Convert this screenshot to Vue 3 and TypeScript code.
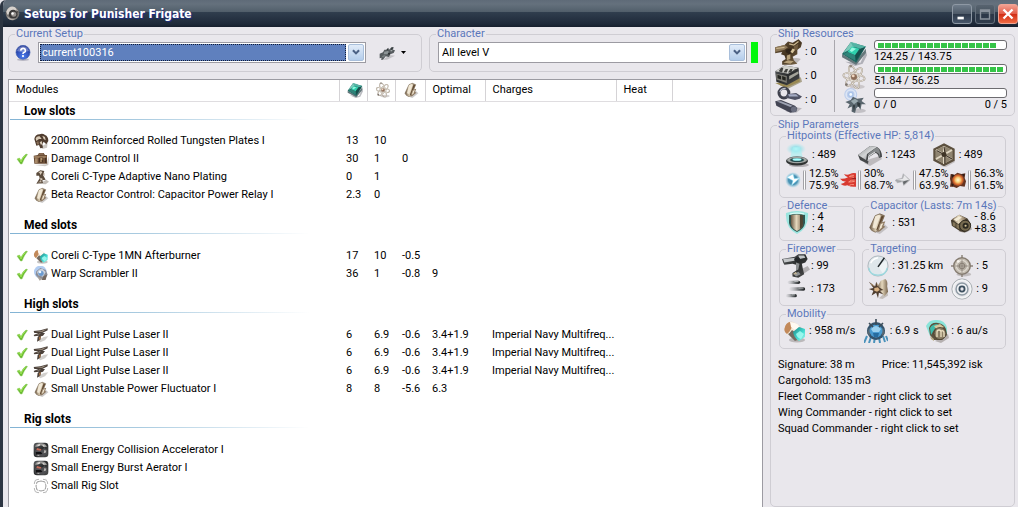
<script setup lang="ts">
import { ref } from 'vue'

interface ModuleRow {
  name: string
  icon: string
  active?: boolean
  cpu?: string
  grid?: string
  cap?: string
  optimal?: string
  charge?: string
}

interface SlotGroup {
  title: string
  rows: ModuleRow[]
}

const cell = '<path d="M9 22 19 13 23 17 14 24z" fill="#aaa6a6" opacity=".6"/><path d="m3 17 6-13 5-2 5 2-6 15-4 3-4-2z" fill="url(#g-bronze)" stroke="#6a563f" stroke-width=".8"/><path d="m9 5 4-2 2 1-6 14-3-1z" fill="#f1e8d6"/><path d="m16 4 2 1-6 14-2 1z" fill="#5e4730"/><path d="m14 12 6-2-2 5 2 1-6 5-3 1z" fill="#8d7860"/><path d="m15 13 3-1-2 4 1 0-4 4z" fill="#f2e7d2"/>'
const thruster = '<ellipse cx="14" cy="21" rx="8" ry="2.5" fill="#8d8988" opacity=".5"/><path d="M2 8Q4 2 10 3l6 3q5 5 5 11-3 5-8 5l-9-7Q1 12 2 8z" fill="url(#g-bone)"/><path d="M2 8q1-4 5-5 3 3 1 7t-4 5Q0 12 2 8z" fill="#c2895a"/><path d="M7 3q6 0 10 5l-5 3-4-3z" fill="#fffaf2"/><path d="M5 15q2-1 4-4l4 3 1 7-2 1z" fill="#746a60"/><path d="m10 13 6-5 6 2v8l-6 4q-5-3-6-9z" fill="url(#g-teal)"/><path d="m13 15 4-3 4 3-3 5q-4-1-5-5z" fill="#a5fbf2" opacity=".85"/>'
const laser = '<path d="M7 20 16 15l7-1-5 6-7 3z" fill="#b4b0ac" opacity=".6"/><path d="M1 6 11 5l11-3v3l-8 4 4 0-3 4-3 1-1 5-5 3 1-7 2-2-7 1-1-2 7-3-6 0z" fill="#4a4039"/><path d="m3 7 9-1 9-3-7 4zM4 12l8-3-2 2z" fill="#ab9c8b"/><path d="m9 15 3-1-1 4-2 2z" fill="#9c6b41"/>'
const rig = '<rect x="1" y="1" width="22" height="22" rx="5" fill="url(#g-dark)"/><path d="M3 7q2-5 9-5 6 0 9 5l-4 1-5-3-5 2z" fill="#9a9997"/><path d="m6 5 4-2 1 2-3 1zm8-1 4 2-2 1z" fill="#e8e6e2"/><path d="M3 12h10l4-3 4 3v6l-5 4-12-1z" fill="#4f4f52"/><path d="m6 9 7 2-2 2-6-1z" fill="#c46a58"/><path d="m4 15 8 0 2 3-9 1z" fill="#111113"/><path d="m17 12 3 1-1 3-3 1zM6 19l4 0-1 2-3-1z" fill="#b5b3b0"/>'
const atom = '<ellipse cx="15" cy="21" rx="7" ry="2" fill="#b7b3b4" opacity=".6"/><g fill="none" stroke="#9f9486" stroke-width="1.5"><ellipse cx="12" cy="12" rx="3.5" ry="11" transform="rotate(-18 12 12)"/><ellipse cx="12" cy="12" rx="3.5" ry="10.5" transform="rotate(42 12 12)"/><ellipse cx="12" cy="12" rx="3.5" ry="10" transform="rotate(100 12 12)"/></g><g fill="none" stroke="#f3eee5" stroke-width=".7"><ellipse cx="12" cy="12" rx="3.5" ry="11" transform="rotate(-18 12 12)"/><ellipse cx="12" cy="12" rx="3.5" ry="10.5" transform="rotate(42 12 12)"/><ellipse cx="12" cy="12" rx="3.5" ry="10" transform="rotate(100 12 12)"/></g><circle cx="12" cy="12" r="2.8" fill="#8d6d58"/><circle cx="11.3" cy="11" r="1.3" fill="#efd6c0"/><circle cx="5" cy="19" r="1.3" fill="#7d7570"/><circle cx="9" cy="2" r="1.2" fill="#91877e"/>'

const icons: Record<string, string> = {
  app: '<circle cx="12" cy="12" r="11" fill="#777472"/><path d="M2 9Q7-2 16 2l5 6-6 1-4 4-7 1z" fill="#d7d2cd"/><circle cx="13" cy="13" r="7" fill="#3c3a3a"/><circle cx="14" cy="13" r="4" fill="#989390"/><circle cx="12" cy="12" r="2" fill="#fff"/><path d="M3 15q5 7 14 5-6 5-12 0z" fill="#b5afaa"/><path d="m18 5 4 5-3 1z" fill="#54504e"/>',
  help: '<ellipse cx="12" cy="22" rx="9" ry="2" fill="#9494a5" opacity=".6"/><circle cx="12" cy="11" r="10.5" fill="url(#g-blue)" stroke="#4766b4" stroke-width="1"/><path d="M3 9Q5 2 12 2t9 7q-9 3-18 0z" fill="#fff" opacity=".3"/><path d="M8.5 8.5Q9 5 12.2 5t3.3 3.2-2.7 3.1q-.8.7-.8 2.2" fill="none" stroke="#fff" stroke-width="2.4"/><circle cx="12" cy="16.6" r="1.6" fill="#fff"/>',
  ship: '<path d="M6 22 16 15l8 1-12 6z" fill="#aaa8ac" opacity=".6"/><path d="m1 13 5-2 2-4 3 0 3-3 1 3 4-4 3 0-1 4 3 1-2 4-5 2-2 4-5-1-4 5-3 0 1-3-3 1z" fill="#565b5e"/><path d="m8 10 5-1 3 2-4 3-5 0z" fill="#8d9496"/><path d="m13 5 1 3-3 0zM18 5l3-1-2 4z" fill="#32373a"/><path d="m4 17 4-2 2 1-4 3z" fill="#777e80"/><circle cx="15" cy="13" r="1.6" fill="#2e3235"/><path d="m17 8 4-1-3 3z" fill="#aab0b1"/>',
  turret: '<path d="M9 22q7-7 14-4l-4 4z" fill="#938e89" opacity=".5"/><path d="m1 8 8-2 3-3 4 1 5-3 3 3-1 4-3 2 0 4-4 2 1 3 3 3-5 1H7l0-3 3-2-1-3-3-1 1-2-6 1z" fill="url(#g-brown)"/><path d="m1 8 8-2 3 2-3 2-8 2z" fill="#8e795a"/><path d="m2 9 7-1M13 5l4 1 4-3" stroke="#cdb991" stroke-width="1" fill="none"/><path d="m10 10 4-1 2 3-3 2-3-2z" fill="#2f2418"/><path d="m17 7 4-2-1 5-3 1z" fill="#715c3f"/><path d="m11 15 3-1 0 4-3 1zM8 21l4-2 5 1-3 2z" fill="#b7a17a"/><path d="m16 9 2 1-2 3-2-1z" fill="#d9c69d"/>',
  launcher: '<path d="m5 20 18-7 1 4-12 6z" fill="#81754a" opacity=".6"/><path d="m1 18 9 4 12-5 0-3-10 3z" fill="#9a8a54"/><path d="m1 8 8-5 12 2 1 9-11 6L2 17z" fill="url(#g-dark)"/><path d="m1 8 8-5 12 2-9 5z" fill="#d0d0cb"/><path d="m2 10 9 2 0 6-9-3z" fill="#7a7971"/><path d="m3 11 3 1v3l-3-1zm4 1 3 1v3l-3-1z" fill="#23241f"/><path d="m4 8 2-3 2 0-1 4zm4 1 2-3 2 0-1 3zm4 0 2-3 2 0-1 3zm4-1 2-2 1 0-1 2z" fill="#40413e"/><path d="m13 12 8-4v2l-8 5z" fill="#a3a399"/>',
  rigging: '<path d="m10 22 8-4 6 1-5 4z" fill="#8f8c92" opacity=".5"/><circle cx="8.500" cy="6" r="4.200" fill="none" stroke="#3f414d" stroke-width="2.600"/><path d="M5 5q1-3 5-3" fill="none" stroke="#b9bdca" stroke-width="1"/><path d="m11 7 8-1 3 2 2 1-2 2-4 1-8-2z" fill="#4f5263"/><path d="m12 7 7 0 2 2-8 0z" fill="#a4abc2"/><path d="m1 13 5-1 12 5 2 2-1 3-5 1L2 17z" fill="#434554"/><path d="m2 13 4 0 10 4-2 1z" fill="#9da2b2"/><ellipse cx="17" cy="20" rx="2.500" ry="2.500" fill="#6b6e7f"/>',
  cpu: '<path d="m4 20 14 1 5-11 1 4-4 8-7 2z" fill="#777984" opacity=".5"/><path d="m1 13 12 7 10-12 0 4-9 11L1 16z" fill="#65777b"/><path d="M1 13 9 2l14 4-9 15z" fill="#1f6761"/><path d="M2 12 9 2l6 1-5 5z" fill="#7ccabb"/><path d="m9 2 14 4-5 2-7-2z" fill="#54b3a4"/><path d="m10 6 7 2-4 6-7-3z" fill="#2fd0ad"/><path d="m10 7 4 1-4 3-2-1z" fill="#98f8e2"/><path d="m18 8 4-1-8 12-1-5z" fill="#174f4c"/><path d="m2 13 4-2 7 3 0 5z" fill="#2f8379"/>',
  atom,
  drone: '<g fill="none" stroke="#bccdeb"><circle cx="9" cy="6" r="5.500" fill="#dce5f4"/><circle cx="9" cy="6" r="3" fill="#aac3e8"/></g><circle cx="9" cy="6" r="1.300" fill="#f3faff"/><ellipse cx="16" cy="21" rx="7" ry="2" fill="#a9a7ac" opacity=".6"/><path d="m4 13 5-2 2-3 4 2 6-1-2 3 4 3-4 0-1 5-2-3-2 2-1 4-3-1 0-5-4 2 2-4z" fill="#5a666e"/><path d="m9 12 4-2 3 2-4 3z" fill="#99a8ae"/><path d="m15 13 3 1-1 4-2-2zM11 16l2 0-1 6z" fill="#2f383d"/>',
  shield: '<ellipse cx="14" cy="22" rx="10" ry="2" fill="#b3b0b5"/><ellipse cx="11" cy="6" rx="10" ry="6" fill="url(#g-glow)"/><path d="M5 15 8 4h7l3 11z" fill="#a9f1f4" opacity=".6"/><ellipse cx="12" cy="18" rx="11" ry="4.500" fill="#303333"/><ellipse cx="12" cy="17" rx="10" ry="3.300" fill="#a0a5a3"/><ellipse cx="12" cy="17" rx="7" ry="2" fill="#24494c"/><ellipse cx="12" cy="16.500" rx="4.500" ry="1.300" fill="#a7ffff"/>',
  armor: '<path d="m6 20 6 3 12-7-2-3-10 3z" fill="#aaa6aa" opacity=".7"/><path d="m0 12 12-9 7 1q5 3 5 10l-3 1q-1-5-4-5l-6 4-1 7L2 17z" fill="#46484a"/><path d="M0 12 12 3l7 1-10 7-1 6z" fill="url(#g-steel)"/><path d="m19 4-9 7 0 7 2-5 6-4 3 2 1 4q1-8-3-11z" fill="#85888a"/><path d="m10 18 1-5 6-4" fill="none" stroke="#e3e4e6"/>',
  hull: '<path d="m8 23 14-7 1 3-9 5z" fill="#aaa5a5" opacity=".6"/><path d="m12 1.500 9.500 5v10.500L12 22l-9.500-5V6.500z" fill="#c8bda6" stroke="#5c503f" stroke-width="2.400"/><path d="m12 3 8 4v9l-8 5-8-5V7z" fill="#8f8470"/><path d="M12 3v18M4 7l16 9M20 7 4 16" stroke="#e0d6c2" stroke-width="2"/><path d="m12 3.500 1 7M4.500 7.500 11 11M20 16l-7-4M12.800 13v8" stroke="#40362b" stroke-width="1.200"/><circle cx="12" cy="11.500" r="2.500" fill="#403527"/>',
  em: '<circle cx="12" cy="12" r="11.500" fill="url(#g-em)"/><path d="m3 8 9-5 2 7 8-1-12 11 2-7z" fill="#fff" stroke="#8fe2fa" stroke-width=".8"/>',
  thermal: '<path d="M24 2q-5-1-9 1-4 2-9 0 2 4 6 5-6 3-12 2 4 5 9 4-4 4-8 4 5 4 10 2 6 3 13 2z" fill="#d83a30"/><path d="M21 5q-4-1-7 2 4 0 7 1M22 12q-5-1-9 3 5 0 9-1M21 19q-4-1-7 1" fill="none" stroke="#f99a84" stroke-width="1.400"/><path d="M24 9q-5-1-8 2 4 0 8 0z" fill="#97201f"/>',
  kinetic: '<path d="m1 11 9-2 2-7 11 10-10 9-2-6-8 2z" fill="#b4b5b8"/><path d="m2 12 10-2 2-5 7 7-7 1z" fill="#e8e8ea"/><path d="m13 14 8-2-8 7-1-4z" fill="#65686b"/><path d="m0 13 9 1" stroke="#8b8d90"/>',
  explosive: '<path d="m1 3 6 1 4-3 6 2 6-1-1 7 2 5-2 8-7-1-5 3-5-2-5 0 1-7-1-5z" fill="#643320"/><circle cx="12" cy="12" r="9" fill="url(#g-fire)"/><path d="m2 3 5 2-4 4zM18 3l4 0-1 4zM2 17l4 2-3 3z" fill="#2f1d16"/>',
  defence: '<path d="M1 2q11-4 22 0 1 15-11 21Q0 17 1 2z" fill="#8be3dc" opacity=".85"/><path d="M4 4q8-2 16 0v8q-1 6-8 9-7-3-8-9z" fill="#31544f"/><path d="M6 4q6-1 12 0v9q-1 5-6 7-5-2-6-7z" fill="url(#g-bronze)"/><path d="M15 4h3v9q0 3-3 5z" fill="#4f4534"/><path d="M5 3q7-2 14 0" stroke="#e4fffb" stroke-width="1.200" fill="none"/>',
  cell,
  recharge: '<path d="m9 21 14-5 1 3-8 4z" fill="#8f8782" opacity=".6"/><path d="m1 9 9-6 9 4 4 6-2 6-5 3-5-1L2 15z" fill="#453c2d"/><path d="m2 8 8-5 8 4-9 6z" fill="url(#g-bronze)"/><path d="m4 8 6-3 3 1-6 4z" fill="#f2ebd7"/><path d="m3 11 3 1v4l-3-1zm4 2 3 1v5l-3-2z" fill="#84765a"/><circle cx="16.500" cy="15" r="6" fill="#75694f" stroke="#2d281f"/><circle cx="17" cy="15" r="3.300" fill="#2c2921"/><circle cx="17" cy="15" r="1.200" fill="#d7c596"/>',
  gun: '<path d="m8 19 14-7 2 3-9 6z" fill="#8d8a8c" opacity=".6"/><path d="M0 6 11 4l3-2 6 0 2 4-2 3-3 1 1 5 1 4-5 3-5-1 0-3 3-2 0-5-3-1-7 1-1-2z" fill="url(#g-dark)"/><path d="m1 6 11-1 1 2L2 9zM14 3l5 0 1 2-5 1z" fill="#c3c6c8"/><path d="m12 9 3 1-1 5-2 1zM10 19l4-2 2 2-4 2z" fill="#8d9092"/><ellipse cx="13" cy="6.500" rx="2.500" ry="2" fill="#25282a"/><path d="m9 19 3-2 1 2z" fill="#c3b496"/>',
  volley: '<g fill="url(#g-streak)"><rect x="2" y="2" width="15" height="4" rx="2"/><rect x="4" y="10" width="19" height="4" rx="2"/><rect x="0" y="18" width="13" height="4" rx="2"/></g><path d="M10 3h5M15 11h6M7 19h4" stroke="#d9dcdd" stroke-width=".8"/>',
  radar: '<circle cx="12" cy="12" r="11" fill="#dfe7eb" stroke="#aab3b9" stroke-width="1"/><path d="M2 14q1 8 10 8 9 0 10-8" fill="none" stroke="#9bd9df" stroke-width="1.500"/><path d="m12 12 9-6q3 8-4 14z" fill="#eef3f5"/><path d="m12 13 7-10" stroke="#20272a" stroke-width="1.600"/><path d="M4 9q2-5 8-6" fill="none" stroke="#fff" stroke-width="1.500"/>',
  scope: '<ellipse cx="14" cy="21" rx="8" ry="2.500" fill="#a7a2a0" opacity=".6"/><path d="M12 0v24M0 12h24" stroke="#8c8379" stroke-width="1.600"/><circle cx="12" cy="12" r="9" fill="#c6bfb4" stroke="#857c71" stroke-width="1.600"/><circle cx="12" cy="12" r="6" fill="#b7b0a5" stroke="#f0ebe3" stroke-width="1"/><circle cx="12" cy="12" r="3" fill="none" stroke="#7f776c" stroke-width="1"/><path d="M12 5v14M5 12h14" stroke="#8a8278" stroke-width=".9"/><circle cx="8" cy="7" r="1.500" fill="#f7f3ec"/>',
  scan: '<path d="m13 22 9-8 1 5-6 4z" fill="#aaa19a" opacity=".6"/><path d="m11 10 4-7 5-2q3 2 2 8l1 6-4 5-5-6z" fill="url(#g-bronze)"/><path d="m2 4 7 5 1-5 3 6 5 3-4 1 4 4-5-2-1 6-2-6-5 3 2-5-5-2 5-1z" fill="#4f3d2e"/><path d="m8 11 4-1 2 3-3 2-3-1z" fill="#dab384"/><path d="m4 6 4 3M11 6l1 3" stroke="#c3a884"/>',
  rings: '<g fill="none"><circle cx="12" cy="12" r="11" stroke="#a1a7ab" stroke-width="1"/><circle cx="12" cy="12" r="9.500" stroke="#f2f4f5" stroke-width="1.500"/><circle cx="12" cy="12" r="6.500" stroke="#8d9aa3" stroke-width="1.600"/><circle cx="12" cy="12" r="4.700" stroke="#eef2f4" stroke-width="1.500"/><circle cx="12" cy="12" r="2.800" stroke="#3c4f5e" stroke-width="2"/></g>',
  thruster,
  agility: '<path d="m3 17-3 7M7 18l-2 6M11 18l-1 6M15 18l1 6M19 17l2 6M22 17l2 5" stroke="#4a92bb" stroke-width="2"/><circle cx="12" cy="12" r="9" fill="#34536c"/><path d="m3 14 2-5 2 1-1 7zM21 14l-2-5-2 1 1 7z" fill="#586873"/><circle cx="12" cy="12" r="6.500" fill="#4a9bd0"/><path d="M7 10q5-6 10 0l-2 3-6 0z" fill="#9bd0ee"/><path d="m9 14 6 0-1 4-4 0z" fill="#276c9f"/><path d="M12 0v6M5 4l4 4M19 4l-4 4" stroke="#3c4c58" stroke-width="1.600"/>',
  warp: '<path d="m10 22 13-7 1 4-8 5z" fill="#928c88" opacity=".6"/><path d="M1 7Q4 0 12 1q8 0 10 8v6l-8 4-9-2z" fill="#79e3d6" opacity=".85"/><path d="M4 9q2-6 9-5 6 1 8 6l1 6-5 5-8 0-4-5z" fill="#5d523e"/><path d="M5 9q2-4 8-4l-4 6-3 5z" fill="#3dbba9"/><path d="m9 7 6-2 4 3-7 3z" fill="#d5c79c"/><circle cx="15" cy="14.500" r="6" fill="#8c7f66" stroke="#453b2b" stroke-width=".8"/><path d="M12 18v-5q0-2 2-2t2 2v5M16 12q3-1 3 2v4" fill="none" stroke="#efe3c4" stroke-width="1.300"/><path d="m5 17 4 3 0 2-3-2z" fill="#b8aa86"/>',
  plates: '<path d="m11 21 11-6-1 7-7 2z" fill="#aaa39b" opacity=".6"/><path d="M2 9q1-7 8-7 4-2 8 1 5 2 5 9l-3 5-4-4-2 4 1 5-4 1-2-5-4 1z" fill="#503d2f"/><path d="M4 8q2-4 6-3l3 4-4 0-4 3zM14 4l4 2 1 5-3-2zM10 14l3-2 1 4-2 2z" fill="#d8cab6"/><path d="m5 14 3-2 1 5-2 1z" fill="#8a715a"/>',
  control: '<path d="m3 21 17-1 4-12-1 13-5 2z" fill="#aaa49d" opacity=".6"/><path d="m1 7 6-1 2-3 7 0 2 3 3 0 0 13H2z" fill="#6c4e36"/><path d="M2 8h18v2H2zM3 11h4v7H3z" fill="#a88a69"/><path d="m8 5 2-1 5 0 1 1z" fill="#d1bda2"/><rect x="9" y="10" width="6" height="7" fill="#4a3222"/><path d="M11 11h3v2h-3zM11 14h2v2h-2z" fill="#d7b889"/><path d="M18 10h2v8h-2z" fill="#463224"/>',
  nano: '<path d="M9 22 20 16l4 3-5 4z" fill="#9b9389" opacity=".6"/><path d="m5 6 6-4 6 1-2 6 4 7-5 1 1 4-10 1 5-8-1-4-4 0z" fill="#5b4b3c"/><path d="m8 5 4-2 2 2-3 4-1-3zM11 13l4 2-4 3zM7 20l5-2 1 2z" fill="#dacdbc"/><path d="m15 7 2-1 0 5 2 4z" fill="#9b8873"/>',
  scramble: '<circle cx="11" cy="9" r="9.500" fill="#a9c7ef" opacity=".9"/><path d="m5 8 6-5 8 3 3 7-5 8-8-2-5-6z" fill="#8b8d96"/><path d="M6 9q3-5 8-5l5 5-4 7-7-2z" fill="#ccd2dc"/><circle cx="12" cy="11" r="4" fill="#6c9bd0"/><circle cx="10.500" cy="9" r="2" fill="#edf7ff"/><path d="m16 15 5-2-2 8-6 0z" fill="#74685f"/><path d="m6 15 5 3 3 1-4 3z" fill="#aaa39c"/>',
  laser,
  rig,
  emptyRig: '<g fill="none" stroke="#aaa" stroke-width="1.300"><path d="M9 2Q2 2 2 9M15 2q7 0 7 7M9 22q-7 0-7-7M15 22q7 0 7-7"/><path d="M10 5q2-1 4 0l4 1 1 4q1 2 0 4l-1 4-4 1q-2 1-4 0l-4-1-1-4q-1-2 0-4l1-4z" stroke="#888" stroke-dasharray="9 1.500"/></g><path d="M3 4l2-2M19 2l2 2M21 20l-2 2M3 20l2 2" stroke="#c7c7c7" stroke-width="1.500"/>',
  check: '<path d="m2 12 5-2 3 5q3-8 10-13l3 1Q16 11 12 22H9z" fill="#66b82f" stroke="#99d36a"/><path d="m4 12 3 0 3 6q3-9 9-13" fill="none" stroke="#a8ef56" stroke-width="1.5"/>',
}

const groups: SlotGroup[] = [
  {
    title: 'Low slots',
    rows: [
      { name: '200mm Reinforced Rolled Tungsten Plates I', icon: 'plates', cpu: '13', grid: '10' },
      { name: 'Damage Control II', icon: 'control', active: true, cpu: '30', grid: '1', cap: '0' },
      { name: 'Coreli C-Type Adaptive Nano Plating', icon: 'nano', cpu: '0', grid: '1' },
      { name: 'Beta Reactor Control: Capacitor Power Relay I', icon: 'cell', cpu: '2.3', grid: '0' },
    ],
  },
  {
    title: 'Med slots',
    rows: [
      { name: 'Coreli C-Type 1MN Afterburner', icon: 'thruster', active: true, cpu: '17', grid: '10', cap: '-0.5' },
      { name: 'Warp Scrambler II', icon: 'scramble', active: true, cpu: '36', grid: '1', cap: '-0.8', optimal: '9' },
    ],
  },
  {
    title: 'High slots',
    rows: [
      ...Array.from({ length: 3 }, (): ModuleRow => ({
        name: 'Dual Light Pulse Laser II', icon: 'laser', active: true, cpu: '6', grid: '6.9',
        cap: '-0.6', optimal: '3.4+1.9', charge: 'Imperial Navy Multifreq...',
      })),
      { name: 'Small Unstable Power Fluctuator I', icon: 'cell', active: true, cpu: '8', grid: '8', cap: '-5.6', optimal: '6.3' },
    ],
  },
  {
    title: 'Rig slots',
    rows: [
      { name: 'Small Energy Collision Accelerator I', icon: 'rig' },
      { name: 'Small Energy Burst Aerator I', icon: 'rig' },
      { name: 'Small Rig Slot', icon: 'emptyRig' },
    ],
  },
]

const hardpoints = ['turret', 'launcher', 'rigging']
const resources = [
  { icon: 'cpu', label: 'CPU', text: '124.25 / 143.75', fill: 94 },
  { icon: 'atom', label: 'Power grid', text: '51.84 / 56.25', fill: 100 },
  { icon: 'drone', label: 'Drones', text: '0 / 0', extra: '0 / 5', fill: 0 },
]
const hitpoints = [
  { icon: 'shield', value: '489' },
  { icon: 'armor', value: '1243' },
  { icon: 'hull', value: '489' },
]
const resists = [
  { icon: 'em', top: '12.5%', bottom: '75.9%' },
  { icon: 'thermal', top: '30%', bottom: '68.7%' },
  { icon: 'kinetic', top: '47.5%', bottom: '63.9%' },
  { icon: 'explosive', top: '56.3%', bottom: '61.5%' },
]
const mobility = [
  { icon: 'thruster', value: '958 m/s' },
  { icon: 'agility', value: '6.9 s' },
  { icon: 'warp', value: '6 au/s' },
]

const setup = ref('current100316')
const character = ref('All level V')
</script>

<template>
  <div class="window">
    <svg class="defs" aria-hidden="true">
      <defs>
        <linearGradient id="g-bronze"><stop offset="0" stop-color="#6d5a45" /><stop offset=".45" stop-color="#e5d8bd" /><stop offset="1" stop-color="#75614a" /></linearGradient>
        <linearGradient id="g-bone" x2="1" y2="1"><stop offset="0" stop-color="#c79b70" /><stop offset=".4" stop-color="#f8eddd" /><stop offset="1" stop-color="#8b857e" /></linearGradient>
        <linearGradient id="g-teal" x2="1" y2="1"><stop offset="0" stop-color="#1d8585" /><stop offset=".6" stop-color="#43dcd2" /><stop offset="1" stop-color="#b2f7ef" /></linearGradient>
        <linearGradient id="g-brown" x2="1" y2="1"><stop offset="0" stop-color="#6d593e" /><stop offset=".5" stop-color="#43331f" /><stop offset="1" stop-color="#84704f" /></linearGradient>
        <linearGradient id="g-dark" x2="1" y2="1"><stop offset="0" stop-color="#5c5f61" /><stop offset=".5" stop-color="#2a2c2d" /><stop offset="1" stop-color="#4c4d4d" /></linearGradient>
        <linearGradient id="g-steel" x2="1" y2="1"><stop offset="0" stop-color="#8b8e90" /><stop offset=".5" stop-color="#d3d5d6" /><stop offset="1" stop-color="#6a6d70" /></linearGradient>
        <linearGradient id="g-streak"><stop offset="0" stop-color="#b9babd" stop-opacity=".2" /><stop offset=".6" stop-color="#6c7073" /><stop offset="1" stop-color="#15181a" /></linearGradient>
        <radialGradient id="g-glow"><stop offset="0" stop-color="#c5fcff" /><stop offset=".4" stop-color="#7fdfe9" stop-opacity=".7" /><stop offset="1" stop-color="#9be8ee" stop-opacity="0" /></radialGradient>
        <radialGradient id="g-em"><stop offset="0" stop-color="#3d90b5" /><stop offset=".6" stop-color="#4a93b4" /><stop offset="1" stop-color="#b7ddec" stop-opacity=".3" /></radialGradient>
        <radialGradient id="g-fire"><stop offset="0" stop-color="#fffbd8" /><stop offset=".4" stop-color="#f9cf78" /><stop offset=".75" stop-color="#d9692c" /><stop offset="1" stop-color="#8b4426" /></radialGradient>
        <radialGradient id="g-blue" cx=".5" cy=".8" r=".8"><stop offset="0" stop-color="#4c7ef0" /><stop offset="1" stop-color="#1b2d8e" /></radialGradient>
      </defs>
    </svg>

    <header class="titlebar">
      <svg class="app-icon" viewBox="0 0 24 24" v-html="icons.app" />
      <h1>Setups for Punisher Frigate</h1>
      <div class="win-buttons">
        <button type="button" aria-label="Minimize"><svg viewBox="0 0 20 20"><path d="M5 13h7v3H5z" fill="#fff" /></svg></button>
        <button type="button" aria-label="Maximize" class="dim"><svg viewBox="0 0 20 20"><path d="M5 5.500h10v10H5zM5 7h10" fill="none" stroke="#8a929c" stroke-width="1.500" /></svg></button>
        <button type="button" aria-label="Close" class="close"><svg viewBox="0 0 20 20"><path d="m5 5 10 10m0-10-10 10" stroke="#fff" stroke-width="2.600" /></svg></button>
      </div>
    </header>

    <main class="client">
      <div class="left">
        <div class="pickers">
          <fieldset>
            <legend><label for="setup">Current Setup</label></legend>
            <div class="picker-row setup-row">
              <button type="button" class="flat" aria-label="Help"><svg class="i16" viewBox="0 0 24 24" v-html="icons.help" /></button>
              <div class="combo selected">
                <select id="setup" v-model="setup"><option>current100316</option></select>
                <span class="arrow"><svg viewBox="0 0 16 17"><path d="m4.500 6 3.500 3.500L11.500 6" fill="none" stroke="#4b6185" stroke-width="2.400" /></svg></span>
              </div>
              <button type="button" class="flat ship-menu" aria-label="Ship menu">
                <svg class="i16" viewBox="0 0 24 24" v-html="icons.ship" />
                <svg class="caret" viewBox="0 0 5 3"><path d="M0 0h5L2.500 3z" /></svg>
              </button>
            </div>
          </fieldset>
          <fieldset>
            <legend><label for="character">Character</label></legend>
            <div class="picker-row char-row">
              <div class="combo">
                <select id="character" v-model="character"><option>All level V</option></select>
                <span class="arrow"><svg viewBox="0 0 16 17"><path d="m4.500 6 3.500 3.500L11.500 6" fill="none" stroke="#4b6185" stroke-width="2.400" /></svg></span>
              </div>
              <span class="status"></span>
            </div>
          </fieldset>
        </div>

        <div class="list">
          <table>
            <colgroup>
              <col class="c-name"><col class="c-num"><col class="c-num"><col class="c-cap"><col class="c-opt"><col class="c-charge"><col class="c-heat"><col>
            </colgroup>
            <thead>
              <tr>
                <th>Modules</th>
                <th aria-label="CPU"><svg class="i16" viewBox="0 0 24 24" v-html="icons.cpu" /></th>
                <th aria-label="Power grid"><svg class="i16" viewBox="0 0 24 24" v-html="icons.atom" /></th>
                <th aria-label="Capacitor"><svg class="i16" viewBox="0 0 24 24" v-html="icons.cell" /></th>
                <th>Optimal</th>
                <th>Charges</th>
                <th>Heat</th>
                <th></th>
              </tr>
            </thead>
            <tbody v-for="group in groups" :key="group.title">
              <tr class="group">
                <th colspan="8" scope="rowgroup"><div class="group-title">{{ group.title }}</div></th>
              </tr>
              <tr v-for="(row, i) in group.rows" :key="i">
                <td>
                  <div class="module">
                    <svg class="check" viewBox="0 0 24 24" v-html="row.active ? icons.check : ''" />
                    <svg class="i16" viewBox="0 0 24 24" v-html="icons[row.icon]" />
                    <span>{{ row.name }}</span>
                  </div>
                </td>
                <td>{{ row.cpu }}</td>
                <td>{{ row.grid }}</td>
                <td>{{ row.cap }}</td>
                <td>{{ row.optimal }}</td>
                <td>{{ row.charge }}</td>
                <td></td>
                <td></td>
              </tr>
            </tbody>
          </table>
        </div>
      </div>

      <aside class="right">
        <fieldset class="resources">
          <legend>Ship Resources</legend>
          <div class="res-grid">
            <div class="hardpoints">
              <div v-for="h in hardpoints" :key="h" class="stat"><svg class="i28" viewBox="0 0 24 24" v-html="icons[h]" />: 0</div>
            </div>
            <div class="bars">
              <div v-for="r in resources" :key="r.icon" class="res">
                <svg class="i26" viewBox="0 0 24 24" v-html="icons[r.icon]" />
                <div class="res-body">
                  <div class="bar" role="progressbar" :aria-label="r.label" :aria-valuenow="r.fill"><div class="fill" :style="{ width: r.fill + '%' }"></div></div>
                  <div class="res-text"><span>{{ r.text }}</span><span>{{ r.extra }}</span></div>
                </div>
              </div>
            </div>
          </div>
        </fieldset>

        <fieldset class="params">
          <legend>Ship Parameters</legend>
          <div class="boxes">
            <fieldset>
              <legend>Hitpoints (Effective HP: 5,814)</legend>
              <div class="hp-row">
                <div v-for="h in hitpoints" :key="h.icon" class="stat"><svg class="i24" viewBox="0 0 24 24" v-html="icons[h.icon]" />: {{ h.value }}</div>
              </div>
              <div class="resist-row">
                <div v-for="r in resists" :key="r.icon" class="resist">
                  <svg class="i16" viewBox="0 0 24 24" v-html="icons[r.icon]" />
                  <i class="sep"></i>
                  <div>{{ r.top }}<br>{{ r.bottom }}</div>
                </div>
              </div>
            </fieldset>

            <div class="pair">
              <fieldset class="narrow">
                <legend>Defence</legend>
                <div class="stat two"><svg class="i24" viewBox="0 0 24 24" v-html="icons.defence" /><div>: 4<br>: 4</div></div>
              </fieldset>
              <fieldset class="wide">
                <legend>Capacitor (Lasts: 7m 14s)</legend>
                <div class="cols">
                  <div class="stat two"><svg class="i22" viewBox="0 0 24 24" v-html="icons.cell" />: 531</div>
                  <div class="stat two"><svg class="i22" viewBox="0 0 24 24" v-html="icons.recharge" /><div>- 8.6<br>+8.3</div></div>
                </div>
              </fieldset>
            </div>

            <div class="pair">
              <fieldset class="narrow">
                <legend>Firepower</legend>
                <div class="stat fire"><svg class="i28" viewBox="0 0 24 24" v-html="icons.gun" />: 99</div>
                <div class="stat fire"><svg class="i28 flatten" viewBox="0 0 24 24" v-html="icons.volley" />: 173</div>
              </fieldset>
              <fieldset class="wide">
                <legend>Targeting</legend>
                <div class="cols">
                  <div class="stat"><svg class="i22" viewBox="0 0 24 24" v-html="icons.radar" />: 31.25 km</div>
                  <div class="stat"><svg class="i22" viewBox="0 0 24 24" v-html="icons.scope" />: 5</div>
                  <div class="stat"><svg class="i22" viewBox="0 0 24 24" v-html="icons.scan" />: 762.5 mm</div>
                  <div class="stat"><svg class="i22" viewBox="0 0 24 24" v-html="icons.rings" />: 9</div>
                </div>
              </fieldset>
            </div>

            <fieldset>
              <legend>Mobility</legend>
              <div class="mob-row">
                <div v-for="m in mobility" :key="m.icon" class="stat"><svg class="i24" viewBox="0 0 24 24" v-html="icons[m.icon]" />: {{ m.value }}</div>
              </div>
            </fieldset>
          </div>

          <div class="notes">
            <div class="note-pair"><span>Signature: 38 m</span><span>Price: 11,545,392 isk</span></div>
            <div>Cargohold: 135 m3</div>
            <div>Fleet Commander - right click to set</div>
            <div>Wing Commander - right click to set</div>
            <div>Squad Commander - right click to set</div>
          </div>
        </fieldset>
      </aside>
    </main>
  </div>
</template>

<style>
html { background: #e9e7ec; }
body { overflow: hidden; }
</style>

<style scoped>
* { box-sizing: border-box; }
.window {
  display: flex;
  flex-direction: column;
  min-height: 100vh;
  overflow: hidden;
  border-left: 3px solid #2c3542;
  border-top-left-radius: 6px;
  background: #e9e7ec;
  color: #000;
  font: 11px/14px Roboto, "Liberation Sans", sans-serif;
}
.defs { position: absolute; width: 0; height: 0; }
svg { display: block; flex: none; }
.i16 { width: 16px; height: 16px; }
.i22 { width: 22px; height: 22px; }
.i24 { width: 24px; height: 24px; }
.i26 { width: 26px; height: 26px; }
.i28 { width: 28px; height: 28px; }
.flatten { height: 20px; }

.titlebar {
  display: flex;
  align-items: center;
  height: 27px;
  margin-left: -3px;
  padding-left: 5px;
  background: linear-gradient(#5f6b78 0, #65717d 4px, #515e6a 12px, #303e4e 12px, #1e2939 24px, #161e2c 27px);
}
.app-icon { width: 15px; height: 15px; }
h1 {
  flex: 1;
  margin: 0 0 0 4px;
  color: #fff;
  font: bold 12px/16px "DejaVu Sans Condensed", "Noto Sans", sans-serif;
  text-shadow: 1px 1px 1px #1c2c88;
}
.win-buttons { display: flex; gap: 3px; }
.win-buttons button {
  width: 20px;
  height: 20px;
  padding: 0;
  border: 1px solid #8e98a4;
  border-radius: 3px;
  background: linear-gradient(#707d8b, #4d5967 50%, #2c3848 50%, #48566a);
}
.win-buttons svg { width: 18px; height: 18px; }
.win-buttons .dim { border-color: #66717e; background: linear-gradient(#57636f, #46525e 50%, #2b3747 50%, #303c4c); }
.win-buttons .close { border-color: #f0a494; background: linear-gradient(#f2a091, #e25a45 50%, #d02c14 50%, #f06a42); }

.client {
  flex: 1;
  display: grid;
  grid-template-columns: 1fr 245px;
  gap: 7px;
  padding: 2px 3px 0 5px;
}
fieldset {
  min-width: 0;
  margin: 0;
  padding: 0 0 5px;
  border: 1px solid #cfcdd3;
  border-radius: 5px;
}
legend {
  margin-left: 6px;
  padding: 0 1px;
  color: #5b77bb;
  line-height: 10px;
  white-space: nowrap;
}

.left { display: flex; flex-direction: column; gap: 7px; min-width: 0; }
.pickers { display: grid; grid-template-columns: 414fr 334fr; gap: 7px; }
.picker-row { display: flex; align-items: center; padding: 3px 4px 3px 6px; }
.char-row { gap: 4px; padding-left: 8px; }
.flat { padding: 0; border: 0; background: none; }
.combo {
  position: relative;
  display: flex;
  flex: 1;
  height: 21px;
  padding: 1px;
  border: 1px solid #9c9ba2;
  background: #fff;
}
.setup-row .combo { margin: 0 13px 0 7px; }
.combo select {
  flex: 1;
  min-width: 0;
  padding: 0 0 0 2px;
  border: 0;
  appearance: none;
  background: #fff;
  color: #000;
  font: inherit;
}
.combo.selected select {
  padding: 0 0 0 1px;
  border: 1px dotted #101b38;
  background: #5f80be;
  color: #fff;
}
.arrow {
  width: 16px;
  margin-left: 2px;
  border: 1px solid #a9bfdb;
  border-radius: 2px;
  background: linear-gradient(#e2ecf9, #b4cdeb);
}
.arrow svg { width: 14px; height: 15px; }
.status { width: 7px; height: 21px; background: #00f80a; }
.ship-menu { display: flex; align-items: center; gap: 6px; margin-right: 11px; }
.caret { width: 5px; height: 3px; }

.list { flex: 1; border: 1px solid #9c9ba2; border-bottom: 0; background: #fff; }
table { width: 100%; border-collapse: collapse; table-layout: fixed; }
.c-name { width: 330px; }
.c-num { width: 28px; }
.c-cap { width: 30px; }
.c-opt { width: 60px; }
.c-charge { width: 131px; }
.c-heat { width: 56px; }
th, td { height: 18px; padding: 0 0 0 7px; text-align: left; font-weight: normal; white-space: nowrap; }
thead th { height: 21px; border-right: 1px solid #d5d3d6; border-bottom: 1px solid #dfdde0; }
thead th:last-child { border-right: 0; }
.group th { height: 43px; padding: 12px 0 12px 1px; vertical-align: top; }
tbody:nth-of-type(1) .group th { height: 30px; padding-top: 0; }
.group-title {
  height: 18px;
  padding-left: 14px;
  border-bottom: 1px solid;
  border-image: linear-gradient(90deg, #82b3d4, #a9cbe0 130px, #fff 300px) 1;
  font: bold 12px/18px Roboto, "Liberation Sans", sans-serif;
}
.module { display: flex; align-items: center; }
.check { width: 12px; height: 12px; margin-right: 5px; }
.module span { margin-left: 2px; }

.right { display: flex; flex-direction: column; gap: 4px; }
.right .stat { display: flex; align-items: center; gap: 3px; height: 24px; white-space: nowrap; }
.resources { padding: 1px 7px 3px 3px; }
.resources legend { margin-left: 3px; }
.res-grid { display: flex; }
.hardpoints { width: 61px; border-right: 1px solid #a9a7ad; }
.bars { flex: 1; padding-left: 6px; }
.res { display: flex; gap: 7px; height: 24px; }
.res-body { flex: 1; }
.bar { height: 10px; padding: 2px 2px 1px 3px; border: 1px solid #6d6c70; border-radius: 3px; background: #fff; }
.fill { height: 5px; background: repeating-linear-gradient(90deg, #35c447 0 6px, #fff 6px 7px); }
.res-text { display: flex; justify-content: space-between; }

.params { flex: 1; }
.boxes { display: grid; gap: 3px; padding: 1px 8px 0; }
.hp-row { display: grid; grid-template-columns: 75fr 75fr 75fr; padding-left: 5px; }
.right .hp-row .stat { height: 27px; }
.resist-row { display: grid; grid-template-columns: repeat(4, 55px); padding-left: 5px; line-height: 12px; }
.resist { display: flex; align-items: center; gap: 2px; }
.sep { width: 3px; height: 20px; margin-right: 1px; border: solid #a3a2a6; border-width: 0 1px; border-radius: 2px; background: #fff; }
.pair { display: grid; grid-template-columns: 77fr 145fr; gap: 7px; }
.right .two { padding-left: 5px; line-height: 12px; }
.wide .cols { display: grid; grid-template-columns: 83fr 60fr; }
.wide .stat { height: 23px; padding-left: 4px; }
.right .wide .two { height: 24px; padding-left: 4px; }
.right .narrow .fire { height: 23px; padding-left: 2px; gap: 1px; }
.mob-row { display: grid; grid-template-columns: 81fr 62fr 80fr; padding-left: 3px; }
.right .mob-row .stat { gap: 2px; }
.notes { padding: 8px 7px 0; line-height: 16px; }
.note-pair { display: flex; gap: 27px; }
</style>
